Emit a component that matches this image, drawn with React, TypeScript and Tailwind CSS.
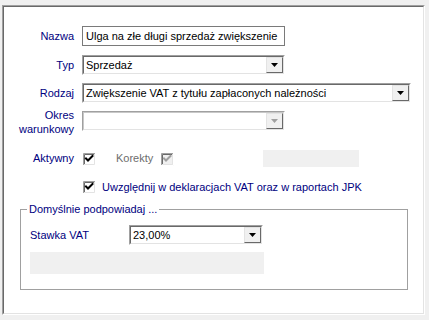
import React from 'react';

const font = { fontFamily: '"Liberation Sans", Arial, sans-serif' };

function DropButton({ disabled }: { disabled?: boolean }) {
  return (
    <div className="w-[17px] h-full border-t border-l border-t-[#e3e3e3] border-l-[#e3e3e3] border-r border-b border-r-[#696969] border-b-[#696969] bg-[#f0f0f0] flex items-center justify-center">
      <svg width="7" height="4" viewBox="0 0 7 4">
        <path d="M0 0 H7 L3.5 4 Z" fill={disabled ? '#a0a0a0' : '#000'} />
      </svg>
    </div>
  );
}

function Combo({ value, width, disabled }: { value?: string; width: string; disabled?: boolean }) {
  return (
    <div className={`${width} h-[20px] border-t border-l border-t-[#a0a0a0] border-l-[#a0a0a0] border-r border-b border-r-white border-b-white`}>
      <div
        className={`w-full h-full flex border-t border-l ${disabled ? 'border-t-[#c8c8c8] border-l-[#c8c8c8]' : 'border-t-[#696969] border-l-[#696969]'} border-r border-b border-r-[#e3e3e3] border-b-[#e3e3e3] bg-white`}
      >
        <div className="flex-1 pl-[2px] flex items-center text-black truncate">{value}</div>
        <DropButton disabled={disabled} />
      </div>
    </div>
  );
}

function Check({ disabled }: { disabled?: boolean }) {
  return (
    <svg width="13" height="13" viewBox="0 0 13 13" className="shrink-0">
      <rect x="0" y="0" width="13" height="13" fill={disabled ? '#f0f0f0' : '#fff'} />
      <path d="M0.5 12 V0.5 H12" stroke="#a0a0a0" fill="none" />
      <path d="M1.5 11 V1.5 H11" stroke="#696969" fill="none" />
      <path d="M12.5 0 V12.5 H0" stroke="#fff" fill="none" />
      <path d="M11.5 1 V11.5 H1" stroke="#e3e3e3" fill="none" />
      <path d="M3 5.5 L5 7.5 L9.5 3" stroke={disabled ? '#a0a0a0' : '#000'} strokeWidth="2" fill="none" strokeLinecap="square" />
    </svg>
  );
}

function Label({ children }: { children: React.ReactNode }) {
  return <div className="w-[70px] text-right text-[#000080] leading-[13px]">{children}</div>;
}

export default function App() {
  return (
    <div className="w-[429px] h-[320px] bg-[#f0f0f0] pt-[5px] pl-[2px] text-[11px]" style={font}>
      <div className="w-[423px] h-[310px] border-t border-l border-t-[#a0a0a0] border-l-[#a0a0a0] border-r border-b border-r-white border-b-white">
        <div className="w-full h-full border-t border-l border-t-[#696969] border-l-[#696969] border-r border-b border-r-[#e3e3e3] border-b-[#e3e3e3] bg-white flex flex-col">
          {/* Nazwa */}
          <div className="mt-[19px] flex items-center">
            <Label>Nazwa</Label>
            <div className="ml-[8px] w-[203px] h-[20px] border border-[#7a7a7a] flex items-center pl-[3px] text-black">
              Ulga na złe długi sprzedaż zwiększenie
            </div>
          </div>

          {/* Typ */}
          <div className="mt-[9px] flex items-center">
            <Label>Typ</Label>
            <div className="ml-[8px]">
              <Combo value="Sprzedaż" width="w-[203px]" />
            </div>
          </div>

          {/* Rodzaj */}
          <div className="mt-[8px] flex items-center">
            <Label>Rodzaj</Label>
            <div className="ml-[8px]">
              <Combo value="Zwiększenie VAT z tytułu zapłaconych należności" width="w-[329px]" />
            </div>
          </div>

          {/* Okres warunkowy */}
          <div className="mt-[8px] flex items-start">
            <div className="w-[70px] text-right text-[#000080] leading-[14px] -mt-[3px]">
              Okres
              <br />
              warunkowy
            </div>
            <div className="ml-[8px]">
              <Combo width="w-[203px]" disabled />
            </div>
          </div>

          {/* Aktywny / Korekty */}
          <div className="mt-[14px] h-[17px] flex items-center">
            <Label>Aktywny</Label>
            <div className="ml-[9px] mt-[2px]">
              <Check />
            </div>
            <span className="ml-[20px] text-[#6d6d6d]">Korekty</span>
            <div className="ml-[8px] mt-[2px]">
              <Check disabled />
            </div>
            <div className="ml-[89px] w-[96px] h-[17px] bg-[#f0f0f0]" />
          </div>

          {/* Uwzględnij */}
          <div className="mt-[14px] h-[13px] flex items-center">
            <div className="ml-[79px]">
              <Check />
            </div>
            <span className="ml-[6px] text-[#000080]">Uwzględnij w deklaracjach VAT oraz w raportach JPK</span>
          </div>

          {/* Group */}
          <div className="mt-[15px] ml-[16px] w-[388px] h-[81px] border border-[#a0a0a0] relative flex flex-col pl-[9px]">
            <span className="absolute -top-[8px] left-[6px] bg-white px-[2px] text-[#000080] leading-[14px]">
              Domyślnie podpowiadaj ...
            </span>
            <div className="mt-[15px] flex items-center">
              <span className="w-[99px] text-[#000080]">Stawka VAT</span>
              <Combo value="23,00%" width="w-[134px]" />
            </div>
            <div className="mt-[7px] w-[234px] h-[22px] bg-[#f0f0f0]" />
          </div>
        </div>
      </div>
    </div>
  );
}
